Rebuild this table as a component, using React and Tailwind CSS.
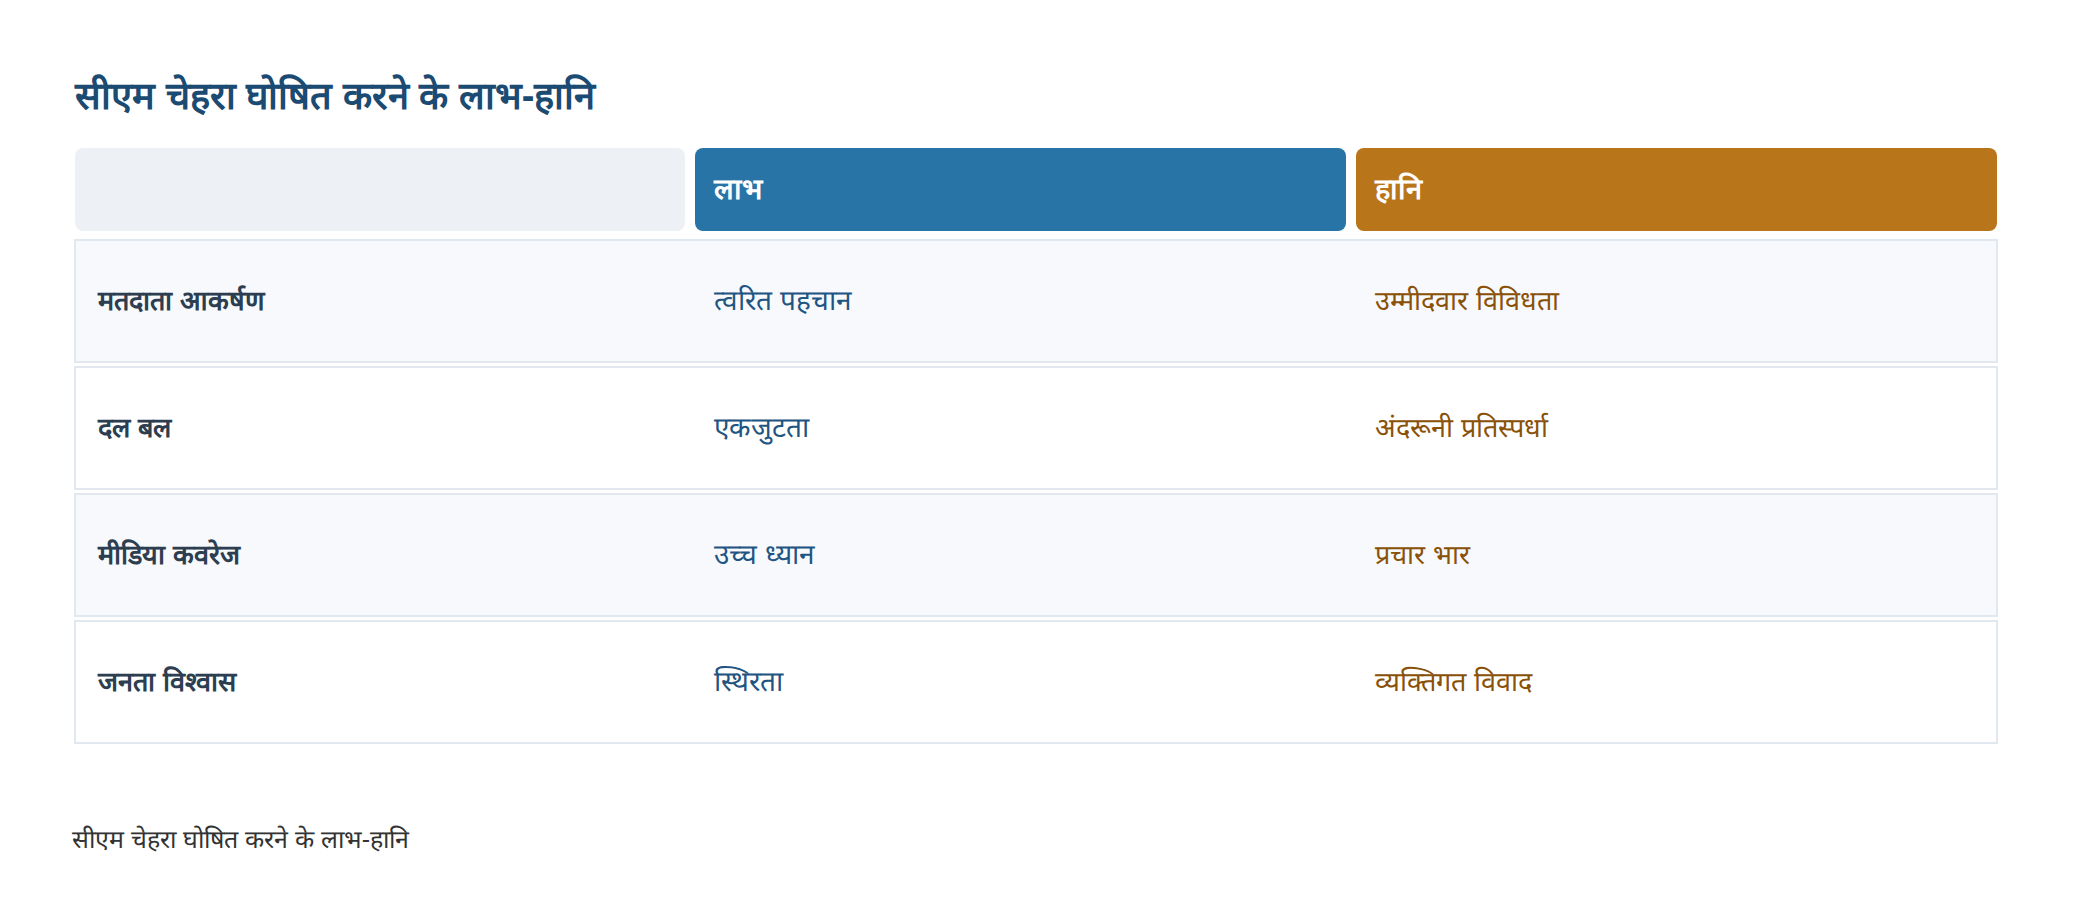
const rows = [
  { factor: 'मतदाता आकर्षण', pro: 'त्वरित पहचान', con: 'उम्मीदवार विविधता' },
  { factor: 'दल बल', pro: 'एकजुटता', con: 'अंदरूनी प्रतिस्पर्धा' },
  { factor: 'मीडिया कवरेज', pro: 'उच्च ध्यान', con: 'प्रचार भार' },
  { factor: 'जनता विश्वास', pro: 'स्थिरता', con: 'व्यक्तिगत विवाद' },
];

export default function App() {
  return (
    <div className="min-h-[904px] bg-white font-['Liberation_Sans',Arial,sans-serif]">
      <div className="pt-[71px] pl-[74px]">
        <h2 className="text-[38px] leading-[50px] font-bold text-[#1b4a72] pl-[1px]">
          सीएम चेहरा घोषित करने के लाभ-हानि
        </h2>

        <div className="mt-[27px] w-[1924px]">
          {/* header */}
          <div className="grid grid-cols-[610px_651px_641px] gap-x-[10px] h-[83px] pl-[1px]">
            <div className="rounded-lg bg-[#edf1f5]" />
            <div className="rounded-lg bg-[#2874a6] flex items-center px-[19px] text-white font-bold text-[29px]">
              लाभ
            </div>
            <div className="rounded-lg bg-[#b9751a] flex items-center px-[19px] text-white font-bold text-[29px]">
              हानि
            </div>
          </div>

          {/* body */}
          <div className="mt-[8px] flex flex-col gap-[3px]">
            {rows.map((row, i) => (
              <div
                key={row.factor}
                className={`h-[124px] border-2 border-[#e2e8f0] grid grid-cols-[638px_661px_1fr] items-center text-[28px] ${
                  i % 2 === 0 ? 'bg-[#f7f9fc]' : 'bg-white'
                }`}
              >
                <div className="pl-[22px] font-bold text-[#2c3e50] text-[27px]">{row.factor}</div>
                <div className="text-[#1f5582]">{row.pro}</div>
                <div className="text-[#8a5108] text-[27px]">{row.con}</div>
              </div>
            ))}
          </div>
        </div>
      </div>

      <p className="mt-[77px] ml-[72px] text-[25px] leading-[36px] text-[#333333]">
        सीएम चेहरा घोषित करने के लाभ-हानि
      </p>
    </div>
  );
}
